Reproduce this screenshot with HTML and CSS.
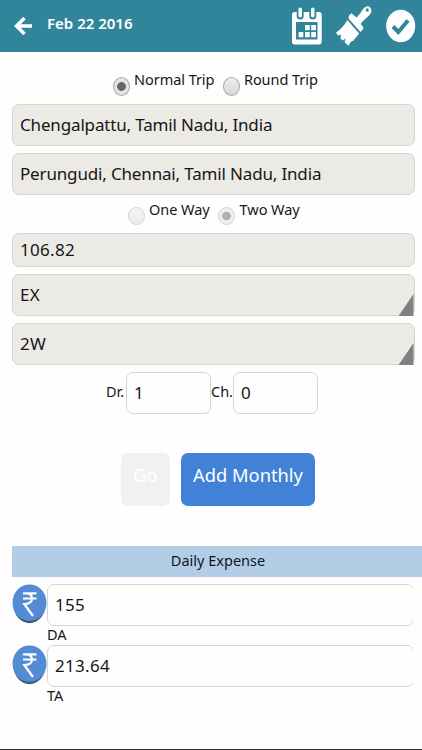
FILE: index.html
```html
<!DOCTYPE html>
<html lang="en">
<head>
    <meta charset="utf-8">
    <meta name="viewport" content="width=device-width, initial-scale=1">
    <title>Expense Entry</title>
    <link rel="stylesheet" href="styles.css">
</head>
<body>
    <header class="header">
        <svg class="back" viewBox="0 0 20 18">
            <path d="M10.5 1 L2.5 9 L10.5 17 M3 9 H18"/>
        </svg>
        <h1>Feb 22 2016</h1>
        <svg class="calendar" viewBox="0 0 30 38">
            <path class="fill" fill-rule="evenodd" d="M2.500 5 H4.700 V9 Q4.700 12.500 8.200 12.500 Q11.700 12.500 11.700 9 V5 H17.300 V9 Q17.300 12.500 20.800 12.500 Q24.300 12.500 24.300 9 V5 H27 Q29.700 5 29.700 8 V34.500 Q29.700 37.500 27 37.500 H2.500 Q0 37.500 0 34.500 V8 Q0 5 2.500 5 Z M4 15 V32.500 H25.500 V15 Z"/>
            <rect class="fill" x="6.500" y="0.500" width="3.500" height="10" rx="1.750"/>
            <rect class="fill" x="19" y="0.500" width="3.500" height="10" rx="1.750"/>
            <path class="fill" d="M13 18 h4.700 v5.300 h-4.700z M19.200 18 h4.700 v5.300 h-4.700z M6.600 25 h4.700 v5.300 h-4.700z M13 25 h4.700 v5.300 h-4.700z M19.200 25 h4.700 v5.300 h-4.700z"/>
        </svg>
        <svg class="brush" viewBox="0 0 36 40">
            <path class="fill" fill-rule="evenodd" d="M12.500 12.500 L13 9.500 L15.500 7.200 L20.500 11.500 Q23.500 9 27 3 Q30.500 -1.500 34 1.200 Q37 5 33.500 9 L25.500 16.500 Q24 18.500 26.500 20 L27.500 22.500 L24.500 26 Z M29.800 4 a1.500 1.800 0 1 0 3 0 a1.500 1.800 0 1 0 -3 0 Z"/>
            <path class="fill" d="M11.300 14 L23.200 27.500 L17.500 34.500 L14.500 36 L12.500 39.700 L8.500 36.200 L9.700 32.500 L6.500 34.500 L4.500 32.500 L5 28.500 L2 29.500 L0 26.500 Q7 22 11.300 14 Z"/>
        </svg>
        <svg class="check" viewBox="0 0 30 34">
            <ellipse class="fill" cx="14.700" cy="17" rx="14.500" ry="16.200"/>
            <path class="tick" d="M7 17.500 L12.300 23 L22 11.500"/>
        </svg>
    </header>

    <form class="trip">
        <div class="choices trip-type">
            <span class="radio on"></span><label class="normal">Normal Trip</label>
            <span class="radio"></span><label>Round Trip</label>
        </div>
        <div class="field place">Chengalpattu, Tamil Nadu, India</div>
        <div class="field place">Perungudi, Chennai, Tamil Nadu, India</div>
        <div class="choices trip-way">
            <span class="radio faded"></span><label class="one">One Way</label>
            <span class="radio on faded"></span><label class="two">Two Way</label>
        </div>
        <div class="field distance">106.82</div>
        <div class="field select">EX</div>
        <div class="field select">2W</div>
        <div class="counts">
            <label class="dr">Dr.</label><div class="field white">1</div>
            <label class="ch">Ch.</label><div class="field white">0</div>
        </div>
        <div class="buttons">
            <button type="button" class="go" disabled>Go</button>
            <button type="button" class="monthly">Add Monthly</button>
        </div>
    </form>

    <section class="expenses">
        <h2>Daily Expense</h2>
        <div class="expense">
            <svg class="rupee" viewBox="0 0 36 40">
                <ellipse class="shadow" cx="17.500" cy="20.700" rx="16" ry="18.500"/>
                <ellipse class="coin" cx="17.500" cy="18.700" rx="17" ry="18.300"/>
                <path class="sign" d="M11 9.300 H24.500 M11 14.500 H24.500 M11 9.300 H14 Q20 9.300 20 14.500 Q20 20 12.300 20 L21 32"/>
            </svg>
            <div class="amount"><div class="field white">155</div></div>
            <label>DA</label>
        </div>
        <div class="expense">
            <svg class="rupee" viewBox="0 0 36 40">
                <ellipse class="shadow" cx="17.500" cy="20.700" rx="16" ry="18.500"/>
                <ellipse class="coin" cx="17.500" cy="18.700" rx="17" ry="18.300"/>
                <path class="sign" d="M11 9.300 H24.500 M11 14.500 H24.500 M11 9.300 H14 Q20 9.300 20 14.500 Q20 20 12.300 20 L21 32"/>
            </svg>
            <div class="amount"><div class="field white">213.64</div></div>
            <label>TA</label>
        </div>
    </section>
</body>
</html>
```
FILE: styles.css
```css
* {
    box-sizing: border-box;
}

body {
    margin: 0;
    height: 750px;
    overflow: hidden;
    background: #fefefe;
    border-bottom: 1px solid #333;
    color: #161616;
    font-family: "Noto Sans", "Open Sans", sans-serif;
    font-size: 14.5px;
}

.header {
    display: flex;
    height: 52px;
    background: #31859b;
    color: white;
}

.header svg {
    flex: none;
}

.header h1 {
    flex: 1;
    margin: 12px 0 0 13px;
    font-size: 15px;
    line-height: 22px;
    font-weight: 600;
}

.fill {
    fill: white;
}

.back {
    width: 20px;
    height: 18px;
    margin: 17px 0 0 14px;
    fill: none;
    stroke: white;
    stroke-width: 3.5;
}

.calendar {
    width: 30px;
    height: 38px;
    margin: 7px 14px 0 0;
}

.brush {
    width: 36px;
    height: 40px;
    margin: 6px 14px 0 0;
}

.check {
    width: 30px;
    height: 34px;
    margin: 9px 6px 0 0;
}

.tick {
    fill: none;
    stroke: #31859b;
    stroke-width: 4;
}

.trip {
    padding: 0 7.5px 0 12px;
}

.choices {
    display: flex;
    line-height: 20px;
    letter-spacing: -0.05px;
}

.trip-type {
    height: 52px;
    padding: 17px 0 0 101px;
}

.trip-way {
    height: 34px;
    margin-top: -3px;
    padding: 0 0 0 116px;
}

.radio {
    width: 17px;
    height: 19px;
    margin: 8px 4px 0 0;
    border: 1px solid #aaa;
    border-radius: 50%;
    background: linear-gradient(#eee, #d8d8d8);
}

.radio.on {
    background: radial-gradient(circle, #666 4px, #e4e4e4 4.7px);
}

.faded {
    opacity: 0.5;
}

.trip-way .radio {
    height: 18px;
}

.normal {
    margin-right: 8.5px;
}

.one {
    margin-right: 8px;
}

.two {
    margin-left: 1px;
}

.field {
    position: relative;
    height: 42px;
    margin-bottom: 7px;
    padding-left: 7px;
    border: 1px solid #d5d5d5;
    border-radius: 7px;
    background: #ebeae5;
    font-size: 17px;
    line-height: 39px;
    letter-spacing: 0.3px;
    white-space: nowrap;
}

.place {
    letter-spacing: -0.16px;
}

.distance {
    height: 34px;
    line-height: 31px;
}

.select::after {
    content: "";
    position: absolute;
    right: 0;
    bottom: -1px;
    width: 15px;
    height: 22px;
    background: #808080;
    clip-path: polygon(100% 0, 100% 100%, 0 100%);
}

.white {
    background: #fefefe;
}

.counts {
    display: flex;
    height: 42px;
    margin-left: 94px;
    line-height: 38px;
}

.counts .field {
    width: 85px;
}

.dr {
    width: 20px;
}

.ch {
    width: 22px;
}

.buttons {
    display: flex;
    gap: 11px;
    margin: 39px 0 0 109px;
}

.buttons button {
    height: 53px;
    padding: 0 0 11px;
    border: none;
    border-radius: 7px;
    font-family: inherit;
    font-size: 18.3px;
    color: white;
}

.go {
    width: 49px;
    background: #f1f1f1;
}

.monthly {
    width: 134px;
    background: #4182d7;
}

.expenses {
    padding: 40px 0 0 12px;
}

.expenses h2 {
    height: 31px;
    margin: 0 0 7px;
    background: #b4cde6;
    color: #0c1622;
    font-size: 14.5px;
    font-weight: normal;
    line-height: 29px;
    text-align: center;
    text-indent: 2px;
}

.expense {
    display: grid;
    grid-template-columns: 35px 366px;
    grid-template-rows: 42px 19px;
}

.rupee {
    width: 36px;
    height: 40px;
}

.shadow {
    fill: #455777;
}

.coin {
    fill: #538bd5;
}

.sign {
    fill: none;
    stroke: white;
    stroke-width: 2.2;
}

/* right edge of the box is cut off */
.amount {
    overflow: hidden;
}

.amount .field {
    width: 367px;
}

.expense label {
    grid-column: 2;
    line-height: 16px;
}
```
